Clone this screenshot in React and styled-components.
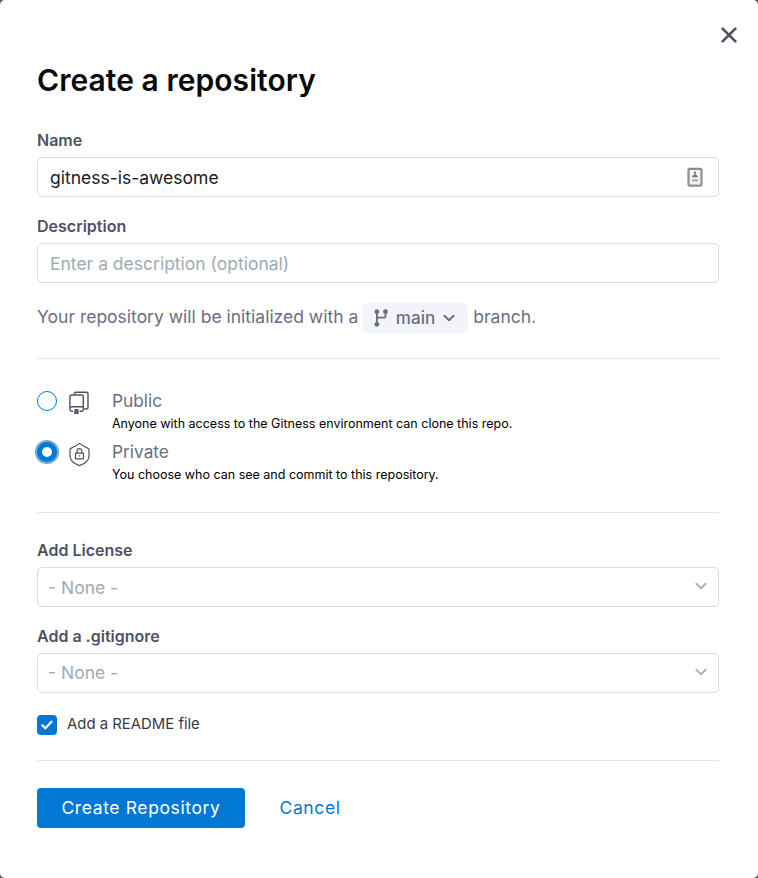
import React from "react";
import styled, { createGlobalStyle } from "styled-components";

const Global = createGlobalStyle`
  *, *::before, *::after { box-sizing: border-box; }
  body { margin: 0; background: #5a5a5c; font-family: Inter, "Liberation Sans", sans-serif; color: #4f5162; }
  button, input { font-family: inherit; }
  svg { display: block; flex: none; }
`;

const Dialog = styled.main`
  position: relative;
  width: 758px;
  height: 878px;
  padding: 60px 39px 0 37px;
  background: #fff;
  border-radius: 5px;
`;

const CloseButton = styled.button`
  position: absolute;
  top: 25px;
  right: 19px;
  width: 20px;
  height: 20px;
  padding: 0;
  border: 0;
  background: none;
`;

const Title = styled.h1`
  margin: 0;
  height: 66px;
  font-size: 30px;
  line-height: 40px;
  font-weight: 600;
  letter-spacing: 0.05px;
  color: #0b0b0d;
  white-space: nowrap;
`;

const Field = styled.div`
  height: 86px;
`;

const Label = styled.label`
  display: block;
  height: 31px;
  line-height: 28px;
  font-size: 16px;
  font-weight: 600;
  color: #4f5162;
`;

const InputBox = styled.div`
  display: flex;
  align-items: center;
  height: 40px;
  padding: 0 15px 0 12px;
  border: 1px solid #d9dae5;
  border-radius: 5px;
`;

const TextInput = styled.input`
  flex: 1;
  min-width: 0;
  height: 38px;
  padding: 0;
  border: 0;
  outline: 0;
  background: none;
  font-size: 17.5px;
  color: #182026;
  &::placeholder { color: #9eabb5; opacity: 1; }
`;

const SelectBox = styled.div`
  display: flex;
  justify-content: space-between;
  height: 40px;
  padding: 0 11px 0 10px;
  border: 1px solid #d9dae5;
  border-radius: 5px;
  font-size: 17.5px;
  line-height: ${(p) => (p.$low ? 40 : 38)}px;
  color: #9eabb5;
  svg { margin-top: 12px; }
`;

const BranchLine = styled.div`
  display: flex;
  height: 30px;
  margin-top: 5px;
  font-size: 17.5px;
  line-height: 28px;
  color: #6b6d85;
  white-space: nowrap;
`;

const BranchButton = styled.button`
  display: flex;
  align-items: center;
  justify-content: flex-start;
  width: 105px;
  height: 30px;
  margin: 0 5px;
  padding: 0 0 0 10px;
  border: 0;
  border-radius: 5px;
  background: #f3f3fa;
  font-size: 17px;
  font-weight: 500;
  letter-spacing: 0.1px;
  color: #6b6d85;
`;

const BranchName = styled.span`
  width: 47px;
  margin-left: 6.5px;
  text-align: left;
`;

const Divider = styled.hr`
  height: 2px;
  margin: ${(p) => p.$top}px 0 ${(p) => p.$bottom}px;
  border: 0;
  border-top: 1px solid #e6e6e7;
  border-left: 1px solid #ededee;
`;

const Option = styled.label`
  display: grid;
  grid-template-columns: 31px 44px 1fr;
  height: 51px;
`;

const Radio = styled.span`
  width: 20px;
  height: 20px;
  margin-top: 2px;
  border: ${(p) => (p.$checked ? "5px" : "1px")} solid #0278d5;
  border-radius: 50%;
  background: #fff;
  box-shadow: ${(p) => (p.$checked ? "0 0 0 2px #6eabd4" : "none")};
`;

const OptionName = styled.div`
  height: 25px;
  font-size: 17.3px;
  line-height: 24px;
  color: #6b6d85;
`;

const OptionHint = styled.div`
  font-size: 12.5px;
  line-height: 20px;
  color: #000;
  white-space: nowrap;
`;

const CheckRow = styled.label`
  display: flex;
  gap: 10px;
  height: 20px;
  margin-top: 7px;
  font-size: 14.9px;
  line-height: 18px;
  color: #383946;
`;

const CheckBox = styled.span`
  display: grid;
  place-items: center;
  width: 20px;
  height: 20px;
  border-radius: 4px;
  background: #0278d5;
`;

const Actions = styled.div`
  display: flex;
  gap: 34.5px;
`;

const PrimaryButton = styled.button`
  width: 208px;
  height: 40px;
  padding: 0 0 1px;
  border: 0;
  border-radius: 4px;
  background: #0278d5;
  color: #fff;
  font-size: 17.5px;
  font-weight: 400;
  letter-spacing: 0.62px;
`;

const LinkButton = styled.button`
  padding: 0 0 1px;
  border: 0;
  background: none;
  color: #0278d5;
  font-size: 17.5px;
  font-weight: 400;
  letter-spacing: 0.62px;
`;

const Chevron = ({ color }) => (
  <svg width="12" height="12" viewBox="0 0 12 12" fill="none" stroke={color} strokeWidth="2" strokeLinecap="round" strokeLinejoin="round">
    <path d="M1.4 3.7 6 8.3l4.6-4.6" />
  </svg>
);

const CloseIcon = () => (
  <svg width="20" height="20" viewBox="0 0 20 20" stroke="#4f5162" strokeWidth="2.7" strokeLinecap="round">
    <path d="M3.6 3.6l12.8 12.8M16.4 3.6L3.6 16.4" />
  </svg>
);

const ContactIcon = () => (
  <svg width="16" height="20" viewBox="0 0 16 20">
    <rect x="1.5" y="1.8" width="13" height="16.8" rx="1" fill="#f2f2f2" stroke="#8f8f8f" strokeWidth="2.2" />
    <path d="M8 4.6v3" stroke="#858585" strokeWidth="2" />
    <path d="M5.2 10.2c0-3.6 5.6-3.6 5.6 0z" fill="#777" />
    <path d="M5 13.3h6" stroke="#b0b0b0" strokeWidth="2.4" />
  </svg>
);

const BranchIcon = () => (
  <svg width="16" height="20" viewBox="0 0 16 20" fill="none" stroke="#6b6d85" strokeWidth="1.8">
    <path d="M3.9 3.5v13M3.9 9.7h7q1.6 0 1.6-1.6V4" />
    <g fill="#6b6d85" stroke="none">
      <circle cx="3.9" cy="3.7" r="2.4" />
      <circle cx="12.5" cy="3.7" r="2.4" />
      <circle cx="3.9" cy="16.3" r="2.4" />
    </g>
  </svg>
);

const RepoIcon = () => (
  <svg width="24" height="28" viewBox="0 0 24 28" fill="none" stroke="#4f5162" strokeWidth="1.4" strokeLinejoin="round">
    <path d="M6.5 5.8V4.7q0-1.5 1.5-1.5h10.5q1.5 0 1.5 1.5v13.8q0 1.5-1.5 1.5h-2.3" />
    <path d="M5 22.3H3.8q-1.9-.4-1.9-2.4V7.9q0-1.9 1.9-1.9h9.7q1.8 0 1.8 1.8v12.5q0 2-1.9 2h-1.9" />
    <path d="M2 19.2q.4-1.4 1.8-1.4h11.4" />
    <path d="M7 20.7h2.8v3.9L8.4 23.7 7 24.6z" fill="#777889" />
  </svg>
);

const ShieldIcon = () => (
  <svg width="24" height="28" viewBox="0 0 24 28" fill="none" stroke="#4f5162" strokeWidth="1.2" strokeLinejoin="round">
    <path d="M11.5 3.4c2.5 2 5.500 3.600 8.600 5q.9.400.9 1.300v6c0 4.700-4.500 8.200-9.500 9.900C6.500 23.900 2 20.400 2 15.700v-6q0-.9.900-1.300c3.100-1.400 6.100-3 8.600-5z" />
    <rect x="7.500" y="13.100" width="8" height="5.700" rx=".4" />
    <path d="M9.100 13v-1.900a2.400 2.400 0 0 1 4.800 0V13M11.500 15.200v1.400" />
  </svg>
);

const CheckIcon = () => (
  <svg width="14" height="12" viewBox="0 0 14 12" fill="none" stroke="#fff" strokeWidth="2.2" strokeLinecap="round" strokeLinejoin="round">
    <path d="M2.3 6.3l3 3L11.5 2.7" />
  </svg>
);

export default function App() {
  return (
    <>
      <Global />
      <Dialog>
        <CloseButton aria-label="Close"><CloseIcon /></CloseButton>
        <Title>Create a repository</Title>
        <Field>
          <Label>Name</Label>
          <InputBox>
            <TextInput defaultValue="gitness-is-awesome" />
            <ContactIcon />
          </InputBox>
        </Field>
        <Field>
          <Label>Description</Label>
          <InputBox><TextInput placeholder="Enter a description (optional)" /></InputBox>
        </Field>
        <BranchLine>
          <span>Your repository will be initialized with a</span>
          <BranchButton><BranchIcon /><BranchName>main</BranchName><Chevron color="#6b6d85" /></BranchButton>
          <span>branch.</span>
        </BranchLine>
        <Divider $top={25} $bottom={29} />
        <Option>
          <Radio />
          <RepoIcon />
          <div>
            <OptionName>Public</OptionName>
            <OptionHint>Anyone with access to the Gitness environment can clone this repo.</OptionHint>
          </div>
        </Option>
        <Option>
          <Radio $checked />
          <ShieldIcon />
          <div>
            <OptionName>Private</OptionName>
            <OptionHint>You choose who can see and commit to this repository.</OptionHint>
          </div>
        </Option>
        <Divider $top={21} $bottom={22} />
        <Field>
          <Label>Add License</Label>
          <SelectBox $low><span>- None -</span><Chevron color="#b0b1c4" /></SelectBox>
        </Field>
        <Field>
          <Label>Add a .gitignore</Label>
          <SelectBox><span>- None -</span><Chevron color="#b0b1c4" /></SelectBox>
        </Field>
        <CheckRow>
          <CheckBox><CheckIcon /></CheckBox>
          <span>Add a README file</span>
        </CheckRow>
        <Divider $top={25} $bottom={26} />
        <Actions>
          <PrimaryButton>Create Repository</PrimaryButton>
          <LinkButton>Cancel</LinkButton>
        </Actions>
      </Dialog>
    </>
  );
}
